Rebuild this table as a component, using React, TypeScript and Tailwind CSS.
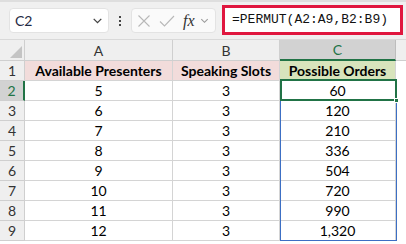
import React from "react";

const rows = [
  { a: "5", b: "3", c: "60" },
  { a: "6", b: "3", c: "120" },
  { a: "7", b: "3", c: "210" },
  { a: "8", b: "3", c: "336" },
  { a: "9", b: "3", c: "504" },
  { a: "10", b: "3", c: "720" },
  { a: "11", b: "3", c: "990" },
  { a: "12", b: "3", c: "1,320" },
];

const Chevron = ({ className }: { className?: string }) => (
  <svg viewBox="0 0 12 12" className={className} fill="none" stroke="currentColor" strokeWidth="1.2">
    <path d="M2.5 4.5 L6 8 L9.5 4.5" />
  </svg>
);

export default function App() {
  return (
    <div className="w-[406px] h-[244px] overflow-hidden bg-white font-['Lato',sans-serif] text-black">
      {/* Formula bar */}
      <div className="h-[39px] bg-[#f0f0f0] border-t-2 border-[#dedede] flex items-center">
        <div className="ml-[9px] w-[100px] h-[25px] bg-white rounded-[4px] border border-[#e3e3e3] flex items-center justify-between pl-[5px] pr-[4px]">
          <span className="text-[14px] text-[#1f2a44]">C2</span>
          <Chevron className="w-[13px] h-[13px] text-[#444]" />
        </div>
        <div className="w-[22px] flex flex-col items-center gap-[2px]">
          <div className="w-[2px] h-[2px] bg-[#444]" />
          <div className="w-[2px] h-[2px] bg-[#444]" />
          <div className="w-[2px] h-[2px] bg-[#444]" />
        </div>
        <div className="w-[85px] h-[25px] bg-[#fafafa] rounded-[4px] border border-[#e3e3e3] flex items-center pl-[5px] gap-[8px]">
          <svg viewBox="0 0 14 14" className="w-[14px] h-[14px]" fill="none" stroke="#b8b8b8" strokeWidth="1.1">
            <path d="M1.5 1.5 L12.5 12.5 M12.5 1.5 L1.5 12.5" />
          </svg>
          <svg viewBox="0 0 16 14" className="w-[16px] h-[14px]" fill="none" stroke="#b8b8b8" strokeWidth="1.1">
            <path d="M1 7.5 L5.5 12 L15 2" />
          </svg>
          <span className="font-['Liberation_Serif',serif] italic text-[16px] text-[#333] leading-none">fx</span>
          <Chevron className="w-[11px] h-[11px] text-[#9a9a9a] -ml-[4px]" />
        </div>
        <div className="ml-[6px] w-[181px] h-[30px] -mt-[2px] bg-white border-[3px] border-[#e0173f] flex items-center pl-[7px]">
          <span className="font-['Liberation_Mono',monospace] text-[13px] text-[#111]">=PERMUT(A2:A9,B2:B9)</span>
        </div>
      </div>

      {/* Sheet */}
      <div className="relative">
        <div className="grid grid-cols-[25px_148px_107px_116px_10px] border-t border-[#d9d9d9]">
          {/* Column headers */}
          <div className="h-[21px] bg-[#efefef] border-r border-b border-[#cfcfcf] relative overflow-hidden">
            <svg viewBox="0 0 12 12" className="absolute right-[2px] bottom-[2px] w-[12px] h-[12px]">
              <path d="M12 0 L12 12 L0 12 Z" fill="#c4c4c4" />
            </svg>
          </div>
          <div className="h-[21px] bg-[#efefef] border-r border-b border-[#cfcfcf] flex items-center justify-center text-[14px] text-[#333]">A</div>
          <div className="h-[21px] bg-[#efefef] border-r border-b border-[#cfcfcf] flex items-center justify-center text-[14px] text-[#333]">B</div>
          <div className="h-[21px] bg-[#d2d2d2] border-r border-[#bdbdbd] border-b-2 border-b-[#217346] flex items-center justify-center text-[14px] text-[#217346]">C</div>
          <div className="h-[21px] bg-[#efefef] border-b border-[#cfcfcf]" />

          {/* Row 1 */}
          <div className="h-[20px] bg-[#efefef] border-r border-b border-[#cfcfcf] flex items-center justify-center text-[14px] text-[#333]">1</div>
          <div className="h-[20px] bg-[#f2dcdb] border-r border-b border-[#d4d4d4] flex items-center justify-center text-[14px] font-bold">Available Presenters</div>
          <div className="h-[20px] bg-[#f2dcdb] border-r border-b border-[#d4d4d4] flex items-center justify-center text-[14px] font-bold">Speaking Slots</div>
          <div className="h-[20px] bg-[#d8e4bc] border-r border-b border-[#d4d4d4] flex items-center justify-center text-[14px] font-bold">Possible Orders</div>
          <div className="h-[20px]" />

          {rows.map((r, i) => {
            const sel = i === 0;
            return (
              <React.Fragment key={i}>
                <div
                  className={
                    sel
                      ? "h-[20px] bg-[#d2d2d2] border-r-2 border-r-[#217346] border-b border-b-[#cfcfcf] flex items-center justify-center text-[14px] text-[#217346]"
                      : "h-[20px] bg-[#efefef] border-r border-b border-[#cfcfcf] flex items-center justify-center text-[14px] text-[#333]"
                  }
                >
                  {i + 2}
                </div>
                <div className="h-[20px] border-r border-b border-[#d4d4d4] flex items-center justify-center text-[14px]">{r.a}</div>
                <div className="h-[20px] border-r border-b border-[#d4d4d4] flex items-center justify-center text-[14px]">{r.b}</div>
                <div className="h-[20px] border-r border-b border-[#d4d4d4] flex items-center justify-center text-[14px]">{r.c}</div>
                <div className="h-[20px]" />
              </React.Fragment>
            );
          })}
        </div>

        {/* Spill range outline C2:C9 */}
        <div className="absolute left-[280px] top-[41px] w-[117px] h-[161px] border border-[#3c6fc4] pointer-events-none" />
        {/* Active cell C2 */}
        <div className="absolute left-[280px] top-[40px] w-[117px] h-[22px] border-2 border-[#217346] pointer-events-none" />
        <div className="absolute left-[394px] top-[59px] w-[5px] h-[5px] bg-[#217346] border border-white pointer-events-none" />
      </div>
    </div>
  );
}
